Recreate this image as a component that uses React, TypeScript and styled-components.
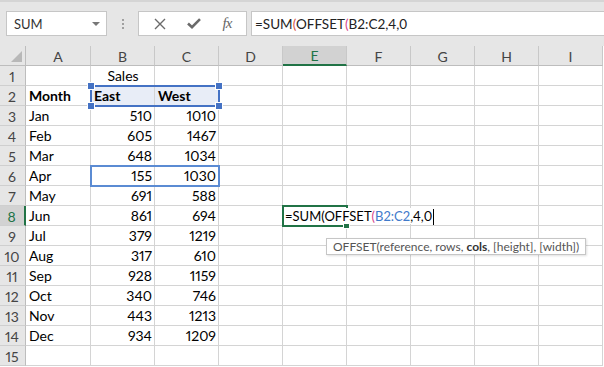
import React from "react";
import styled, { createGlobalStyle, css } from "styled-components";

// -------------------- GLOBAL -------------------- //

const GlobalStyle = createGlobalStyle`
  html, body {
    margin: 0;
    padding: 0;
    background: #ffffff;
    font-family: Lato, "Noto Sans", "Liberation Sans", sans-serif;
  }
`;

const GREEN = "#217346";
const BLUE = "#4472c4";
const GRID = "#d4d4d4";

// -------------------- FORMULA BAR -------------------- //

const Toolbar = styled.div`
  height: 46px;
  box-sizing: border-box;
  border-top: 2px solid #d5d5d5;
  background: #e6e6e6;
  display: flex;
  align-items: center;
  padding: 0 0 1px 6px;
`;

const NameBox = styled.div`
  width: 101px;
  height: 25px;
  box-sizing: border-box;
  border: 1px solid #c6c6c6;
  background: #fff;
  display: flex;
  align-items: center;
  justify-content: space-between;
  padding: 1px 6px 0 7px;
  font-size: 13px;
  color: #333;
`;

const DropArrow = styled.span`
  width: 0;
  height: 0;
  border-left: 4px solid transparent;
  border-right: 4px solid transparent;
  border-top: 4px solid #777;
`;

const Grip = styled.div`
  width: 31px;
  display: flex;
  flex-direction: column;
  align-items: center;
  gap: 2px;

  span {
    width: 2px;
    height: 2px;
    background: #a0a0a0;
  }
`;

const ButtonBox = styled.div`
  width: 109px;
  height: 25px;
  box-sizing: border-box;
  border: 1px solid #c6c6c6;
  background: #fff;
  display: flex;
  align-items: center;
  justify-content: space-around;
  padding: 0 4px;
`;

const FxLabel = styled.span`
  font-family: "Liberation Serif", serif;
  font-style: italic;
  font-size: 15px;
  color: #666;
  letter-spacing: -1px;
`;

const FormulaBox = styled.div`
  flex: 1;
  height: 25px;
  margin-left: 4px;
  box-sizing: border-box;
  border: 1px solid #c6c6c6;
  border-right: none;
  background: #fff;
  padding: 0 0 0 3px;
  line-height: 24px;
  font-size: 13.5px;
  color: #222;
  white-space: nowrap;
`;

const Paren = styled.span<{ tone: string }>`
  color: ${({ tone }) => tone};
`;

const Ref = styled.span`
  color: #3f7acb;
`;

// -------------------- SHEET GRID -------------------- //

const Sheet = styled.div`
  position: relative;
  display: grid;
  grid-template-columns: 26px 65px repeat(8, 64px);
  grid-auto-rows: 20px;
  font-size: 14px;
  font-variant-numeric: proportional-nums;
  color: #000;
`;

const headerBase = css`
  box-sizing: border-box;
  background: #e6e6e6;
  color: #444;
  display: flex;
  align-items: center;
  justify-content: center;
  font-size: 14px;
`;

const Corner = styled.div`
  ${headerBase};
  position: relative;
  border-right: 1px solid #bdbdbd;
  border-bottom: 1px solid #bdbdbd;

  &::after {
    content: "";
    position: absolute;
    right: 3px;
    bottom: 3px;
    border-left: 11px solid transparent;
    border-bottom: 11px solid #b8b8b8;
  }
`;

const ColHeader = styled.div<{ active?: boolean }>`
  ${headerBase};
  padding-top: 1px;
  border-right: 1px solid #c8c8c8;
  border-bottom: ${({ active }) =>
    active ? `2px solid ${GREEN}` : "1px solid #bdbdbd"};
  background: ${({ active }) => (active ? "#d2d2d2" : "#e6e6e6")};
  color: ${({ active }) => (active ? GREEN : "#444")};
`;

const RowHeader = styled.div<{ active?: boolean }>`
  ${headerBase};
  border-right: ${({ active }) =>
    active ? `2px solid ${GREEN}` : "1px solid #bdbdbd"};
  border-bottom: 1px solid #cfcfcf;
  background: ${({ active }) => (active ? "#d2d2d2" : "#e6e6e6")};
  color: ${({ active }) => (active ? GREEN : "#444")};
  padding: 1px 1px 0 0;
`;

const Cell = styled.div<{
  align?: "left" | "right" | "center";
  bold?: boolean;
  picked?: boolean;
}>`
  box-sizing: border-box;
  border-right: 1px solid ${GRID};
  border-bottom: 1px solid ${GRID};
  background: ${({ picked }) => (picked ? "#e8edf7" : "#fff")};
  display: flex;
  align-items: flex-end;
  justify-content: ${({ align }) =>
    align === "right" ? "flex-end" : align === "center" ? "center" : "flex-start"};
  padding: 0 2px 1px 3px;
  font-weight: ${({ bold }) => (bold ? 700 : 400)};
  white-space: nowrap;
  line-height: 16px;
  position: relative;
`;

// -------------------- OVERLAYS -------------------- //

const RangeBox = styled.div<{ thin?: boolean }>`
  position: absolute;
  box-sizing: border-box;
  border: 2px solid ${({ thin }) => (thin ? "#5b8bd3" : BLUE)};
  pointer-events: none;
`;

const Handle = styled.span<{ x: "l" | "r"; y: "t" | "b" }>`
  position: absolute;
  width: 6px;
  height: 6px;
  background: ${BLUE};
  border: 1px solid #fff;
  box-sizing: content-box;
  ${({ x }) => (x === "l" ? "left: -5px;" : "right: -5px;")}
  ${({ y }) => (y === "t" ? "top: -5px;" : "bottom: -5px;")}
`;

const ActiveBox = styled.div`
  position: absolute;
  box-sizing: border-box;
  border: 2px solid ${GREEN};
  z-index: 1;
`;

const FillHandle = styled.span`
  position: absolute;
  right: -4px;
  bottom: -4px;
  width: 5px;
  height: 5px;
  background: ${GREEN};
  border: 1px solid #fff;
  z-index: 3;
`;

const Editor = styled.div`
  position: absolute;
  left: 285px;
  top: 162px;
  height: 16px;
  padding-right: 2px;
  background: #fff;
  line-height: 16px;
  font-size: 13px;
  font-weight: 400;
  white-space: nowrap;
  z-index: 2;
`;

const Caret = styled.span`
  display: inline-block;
  width: 1px;
  height: 16px;
  background: #000;
  margin-left: 1px;
  vertical-align: -4px;
`;

const Tooltip = styled.div`
  position: absolute;
  left: 326px;
  top: 192px;
  height: 17px;
  box-sizing: border-box;
  padding: 0 6px;
  border: 1px solid #c6c6c6;
  background: #fff;
  box-shadow: 1px 1px 2px rgba(0, 0, 0, 0.12);
  display: flex;
  align-items: center;
  font-size: 12px;
  color: #555;
  white-space: nowrap;
  z-index: 4;

  b {
    color: #333;
  }
`;

// -------------------- DATA -------------------- //

const columns = ["A", "B", "C", "D", "E", "F", "G", "H", "I"];

const sales: [string, number, number][] = [
  ["Jan", 510, 1010],
  ["Feb", 605, 1467],
  ["Mar", 648, 1034],
  ["Apr", 155, 1030],
  ["May", 691, 588],
  ["Jun", 861, 694],
  ["Jul", 379, 1219],
  ["Aug", 317, 610],
  ["Sep", 928, 1159],
  ["Oct", 340, 746],
  ["Nov", 443, 1213],
  ["Dec", 934, 1209],
];

type CellData = {
  text?: string | number;
  align?: "left" | "right" | "center";
  bold?: boolean;
  picked?: boolean;
};

const buildRows = (): CellData[][] => {
  const rows: CellData[][] = [];
  const blank = (): CellData[] => columns.map(() => ({}));

  const r1 = blank();
  r1[1] = { text: "Sales", align: "center" };
  rows.push(r1);

  const r2 = blank();
  r2[0] = { text: "Month", bold: true };
  r2[1] = { text: "East", bold: true, picked: true };
  r2[2] = { text: "West", bold: true, picked: true };
  rows.push(r2);

  sales.forEach(([m, e, w]) => {
    const r = blank();
    r[0] = { text: m };
    r[1] = { text: e, align: "right" };
    r[2] = { text: w, align: "right" };
    rows.push(r);
  });

  rows.push(blank());
  return rows;
};

// -------------------- ICONS -------------------- //

const CancelIcon = () => (
  <svg width="12" height="12" viewBox="0 0 12 12">
    <path d="M1 1 L11 11 M11 1 L1 11" stroke="#6a6a6a" strokeWidth="1.4" fill="none" />
  </svg>
);

const EnterIcon = () => (
  <svg width="14" height="11" viewBox="0 0 14 11">
    <path d="M1 5.5 L5 9.2 L13 1.2" stroke="#6a6a6a" strokeWidth="2.6" fill="none" />
  </svg>
);

// -------------------- MAIN -------------------- //

const App: React.FC = () => {
  const rows = buildRows();

  return (
    <>
      <GlobalStyle />
      <Toolbar>
        <NameBox>
          SUM
          <DropArrow />
        </NameBox>
        <Grip>
          <span />
          <span />
          <span />
        </Grip>
        <ButtonBox>
          <CancelIcon />
          <EnterIcon />
          <FxLabel>fx</FxLabel>
        </ButtonBox>
        <FormulaBox>
          =SUM<Paren tone="#d9574a">(</Paren>OFFSET<Paren tone="#d6458f">(</Paren>B2:C2,4,0
        </FormulaBox>
      </Toolbar>

      <Sheet>
        <Corner />
        {columns.map((c) => (
          <ColHeader key={c} active={c === "E"}>
            {c}
          </ColHeader>
        ))}

        {rows.map((row, i) => (
          <React.Fragment key={i}>
            <RowHeader active={i === 7}>{i + 1}</RowHeader>
            {row.map((cell, j) => (
              <Cell key={j} align={cell.align} bold={cell.bold} picked={cell.picked}>
                {cell.text}
              </Cell>
            ))}
          </React.Fragment>
        ))}

        {/* reference range B2:C2 */}
        <RangeBox style={{ left: 90, top: 39, width: 130, height: 22 }}>
          <Handle x="l" y="t" />
          <Handle x="r" y="t" />
          <Handle x="l" y="b" />
          <Handle x="r" y="b" />
        </RangeBox>

        {/* offset preview B6:C6 */}
        <RangeBox thin style={{ left: 90, top: 119, width: 130, height: 22 }} />

        {/* active cell E8 in edit mode */}
        <ActiveBox style={{ left: 282, top: 159, width: 66, height: 22 }}>
          <FillHandle />
        </ActiveBox>
        <Editor>
          =SUM(OFFSET<Paren tone="#d6458f">(</Paren><Ref>B2:C2</Ref>,4,0<Caret />
        </Editor>

        <Tooltip>
          OFFSET(reference, rows,&nbsp;<b>cols</b>, [height], [width])
        </Tooltip>
      </Sheet>
    </>
  );
};

export default App;
